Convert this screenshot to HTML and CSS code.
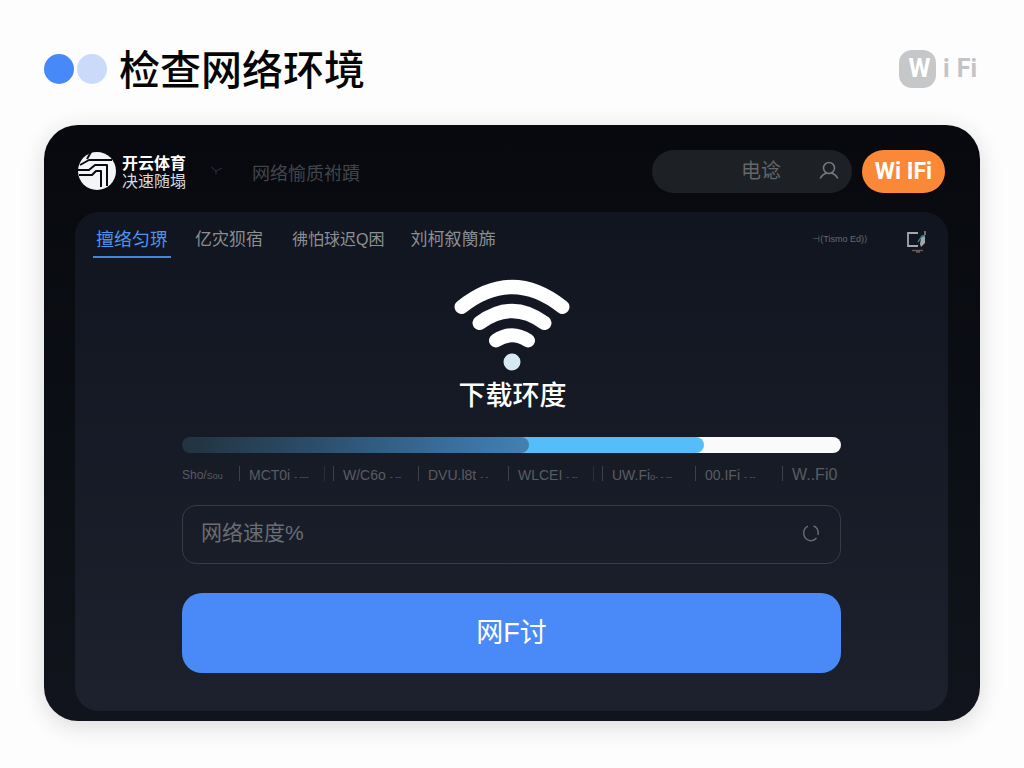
FILE: index.html
```html
<!DOCTYPE html>
<html lang="zh-CN">
<head>
<meta charset="utf-8">
<meta name="viewport" content="width=device-width, initial-scale=1">
<title>检查网络环境</title>
<link rel="stylesheet" href="styles.css">
</head>
<body>
<header class="page-head">
  <div class="dots"><span class="dot"></span><span class="dot dot-light"></span></div>
  <h1 class="title">检查网络环境</h1>
  <div class="wifi-mark"><span class="mark-tile">W</span><span class="mark-i">i</span><span>Fi</span></div>
</header>
<main class="device">
  <div class="topbar">
    <a class="brand" href="#">
      <svg class="brand-logo" viewBox="0 0 38 38" aria-hidden="true">
        <circle cx="19" cy="19" r="19" fill="#f4f5f6"/>
        <g fill="none" stroke="#090b10" stroke-width="2" stroke-linejoin="round">
          <path d="M13 0 9 7"/>
          <path d="M2 13 11 8H34"/>
          <path d="M0 18H11L17 13H29V34"/>
          <path d="M1 23H14L18 19H23V35"/>
        </g>
      </svg>
      <span class="brand-text"><span class="brand-name">开云体育</span><span class="brand-sub">决速随塌</span></span>
    </a>
    <svg class="chevron" viewBox="0 0 14 12" aria-hidden="true"><path d="M1 2 6 6 12 3M6 6V9" fill="none" stroke="#30343a" stroke-width="1"/></svg>
    <span class="crumb">网络愉质祔蹟</span>
    <button class="account" type="button">
      <span class="account-name">电谂</span>
      <svg class="user" viewBox="0 0 20 20" fill="none" stroke="#74777b" stroke-width="1.600" stroke-linecap="round" aria-hidden="true"><circle cx="10" cy="7" r="5.500"/><path d="M1.500 17C3 14 5 12.800 7.500 12M12.500 12C15 12.800 17 14 18.500 17"/></svg>
    </button>
    <button class="wifi-btn" type="button">Wi IFi</button>
  </div>
  <section class="panel">
    <nav class="tabs">
      <a class="tab tab-active" href="#">擅络匀琾</a>
      <a class="tab tab-second" href="#">亿灾狈宿</a>
      <a class="tab tab-third" href="#">彿怕球迟Q困</a>
      <a class="tab" href="#">刘柯叙簢旆</a>
      <span class="tab-note">⊣(Tismo Ed)⟩</span>
      <button class="edit" type="button" aria-label="编辑">
        <svg viewBox="0 0 22 24" fill="none" aria-hidden="true"><path d="M12 4H2V17H12" stroke="#a3a7ab" stroke-width="1.800"/><path d="M14 15 15 9 19 6V14L15 18Z" fill="#a3a7ab"/><path d="M12 13 16 7H19" stroke="#3d8a91" stroke-width="1.300"/><path d="M19 2V6" stroke="#91836d" stroke-width="1.600"/><path d="M6 21.500H17M10 23H14" stroke="#665957" stroke-width="1.300"/></svg>
      </button>
    </nav>
    <div class="content">
      <svg class="wifi" viewBox="0 0 116 92" fill="none" stroke="#fff" stroke-linecap="round" aria-hidden="true">
        <path d="M7.500 28Q58-12 108.500 28" stroke-width="14"/>
        <path d="M25.500 44Q58 20 90.500 44" stroke-width="14"/>
        <path d="M42 61.500Q58 51 74 61.500" stroke-width="14"/>
        <circle cx="58" cy="83" r="8.500" fill="#d7eaf4" stroke="none"/>
      </svg>
      <h2 class="caption">下载环度</h2>
      <div class="bar" role="progressbar" aria-label="下载环度" aria-valuemin="0" aria-valuemax="100" aria-valuenow="79">
        <div class="bar-fill" style="width:79.2%"><div class="bar-done" style="width:66.500%"></div></div>
      </div>
      <div class="scale">
        <span class="mark mark-first">Sho/<small>Sou</small></span>
        <span class="mark">MCT0i <small>- ---</small></span>
        <span class="mark mark-double">W/C6o <small>- --</small></span>
        <span class="mark">DVU.l8t <small>- -</small></span>
        <span class="mark">WLCEI <small>- --</small></span>
        <span class="mark mark-double">UW.Fi<small>o- - --</small></span>
        <span class="mark">00.IFi <small>- --</small></span>
        <span class="mark mark-last">W..Fi0</span>
      </div>
      <label class="field">
        <input class="speed" type="text" placeholder="网络速度%" aria-label="网络速度%">
        <svg class="spinner" viewBox="0 0 18 18" fill="none" stroke="#696d73" stroke-width="1.400" aria-hidden="true"><path d="M6 2.200C.5 4.500.5 12.500 5 15.500C8 17.500 12 17 14.500 14M16 11C17 7 15 3 11.500 2"/></svg>
      </label>
      <button class="submit" type="button">网F讨</button>
    </div>
  </section>
</main>
</body>
</html>
```
FILE: styles.css
```css
* { box-sizing: border-box; }

body {
  margin: 0;
  min-height: 100vh;
  padding: 0 44px 47px;
  display: flex;
  flex-direction: column;
  background: #fdfdfd;
  color: #fff;
  font-family: "Liberation Sans", "Noto Sans CJK SC", sans-serif;
}

button, input { font: inherit; border: 0; }
button { padding: 0; cursor: pointer; }
a { color: inherit; text-decoration: none; }
svg { display: block; flex: none; }

.page-head {
  display: flex;
  align-items: center;
  height: 125px;
  padding-bottom: 12px;
  flex: none;
}
.dots { display: flex; gap: 3px; margin-top: 24px; }
.dot { width: 30px; height: 30px; border-radius: 50%; background: #4789f8; }
.dot-light { background: #c9dafb; }
.title {
  margin: 20px 0 0 12px;
  color: #050505;
  font: 500 41px/60px "Noto Sans CJK SC", sans-serif;
}
.wifi-mark {
  display: flex;
  align-items: center;
  margin: 24px 3px 0 auto;
  color: #c2c4c6;
  font: 700 25px/38px Roboto, sans-serif;
}
.mark-tile {
  width: 37px;
  height: 38px;
  padding-left: 4px;
  border-radius: 13px;
  background: #c5c7c9;
  color: #fff;
  text-align: center;
}
.mark-i { margin: 0 7px; }

.device {
  flex: 1;
  display: flex;
  flex-direction: column;
  padding: 0 32px 10px 31px;
  border-radius: 34px;
  background: linear-gradient(#07090e, #11141c);
  box-shadow: 0 5px 24px rgba(0, 0, 0, .14);
}
.topbar { display: flex; align-items: center; height: 87px; padding: 5px 3px 0; flex: none; }
.brand { display: flex; align-items: center; gap: 6px; }
.brand-logo { width: 38px; height: 38px; }
.brand-text { display: flex; flex-direction: column; padding-top: 3px; font-size: 16px; line-height: 18px; }
.brand-name { font-weight: 700; }
.brand-sub { color: #d6d8da; }
.chevron { width: 14px; height: 12px; margin-left: 24px; }
.crumb { margin: 5px 0 0 28px; color: #42454a; font-size: 18px; line-height: 26px; }
.account {
  display: flex;
  align-items: center;
  justify-content: flex-end;
  gap: 38px;
  width: 200px;
  height: 43px;
  margin-left: auto;
  padding-right: 13px;
  border-radius: 22px;
  background: #1d2024;
  color: #63666a;
  font-size: 20px;
  line-height: 24px;
}
.user { width: 20px; height: 20px; }
.wifi-btn {
  width: 83px;
  height: 43px;
  margin-left: 10px;
  border-radius: 22px;
  background: #fb8836;
  color: #fff;
  font: 700 23px/43px Roboto, sans-serif;
}

.panel { flex: 1; padding: 0 18px 38px; border-radius: 24px; background: linear-gradient(#111520, #1d212d); }
.tabs { display: flex; align-items: center; height: 54px; color: #8c8f92; font-size: 17px; }
.tab { padding-top: 4px; line-height: 34px; border-bottom: 2px solid transparent; }
.tab-active {
  width: 78px;
  margin-right: 24px;
  margin-top: 4px;
  padding-top: 0;
  border-color: #4187dd;
  color: #4b94ed;
  font-size: 18px;
  text-align: center;
  line-height: 32px;
}
.tab-second { margin-right: 29px; }
.tab-third { margin-right: 26px; font-size: 16px; }
.tab-note { margin-left: auto; color: #666a6f; font-size: 9px; }
.edit { width: 22px; margin: 4px 2px 0 38px; background: none; }

.content { display: flex; flex-direction: column; margin: 0 89px; }
.wifi { width: 116px; height: 92px; margin: 13px auto 0; }
.caption {
  margin: 3px 0 0 2px;
  text-align: center;
  font: 500 27px/40px "Noto Sans CJK SC", sans-serif;
}
.bar { height: 16px; margin-top: 23px; border-radius: 8px; background: linear-gradient(90deg, transparent 50%, #fafafa 50%); }
.bar-fill { height: 16px; border-radius: 8px; background: linear-gradient(90deg, transparent 50%, #56bdfb 50%); }
.bar-done { height: 16px; border-radius: 8px; background: linear-gradient(90deg, #22323f, #2b4b67 35%, #3d79ae 90%, #447fae); }

.scale {
  display: grid;
  grid-template-columns: 57fr 94fr 85fr 90fr 94fr 93fr 87fr 59fr;
  margin-top: 13px;
  color: #585c62;
  font-size: 14px;
  line-height: 18px;
}
.mark { position: relative; padding-left: 10px; white-space: nowrap; }
.mark-first { padding-left: 0; font-size: 12px; }
.mark-last { font-size: 16px; }
.mark + .mark { background: linear-gradient(#3c4047, #3c4047) 0 0 / 1px 15px no-repeat; }
.mark-double::before { content: ""; position: absolute; left: -9px; top: 0; width: 1px; height: 15px; background: #2b2f37; }
.mark small { font-size: 9px; }

.field {
  display: flex;
  align-items: center;
  height: 59px;
  margin-top: 19px;
  padding: 0 20px 4px 18px;
  border: 1px solid #373b43;
  border-radius: 14px;
}
.speed { flex: 1; min-width: 0; padding: 0; background: none; color: #fff; outline: 0; font-size: 21px; line-height: 32px; }
.speed::placeholder { color: #6a6d72; opacity: 1; }
.spinner { width: 18px; height: 18px; }
.submit {
  height: 80px;
  margin-top: 29px;
  padding-bottom: 6px;
  border-radius: 20px;
  background: #498af8;
  color: #fff;
  font-size: 27px;
}
```
